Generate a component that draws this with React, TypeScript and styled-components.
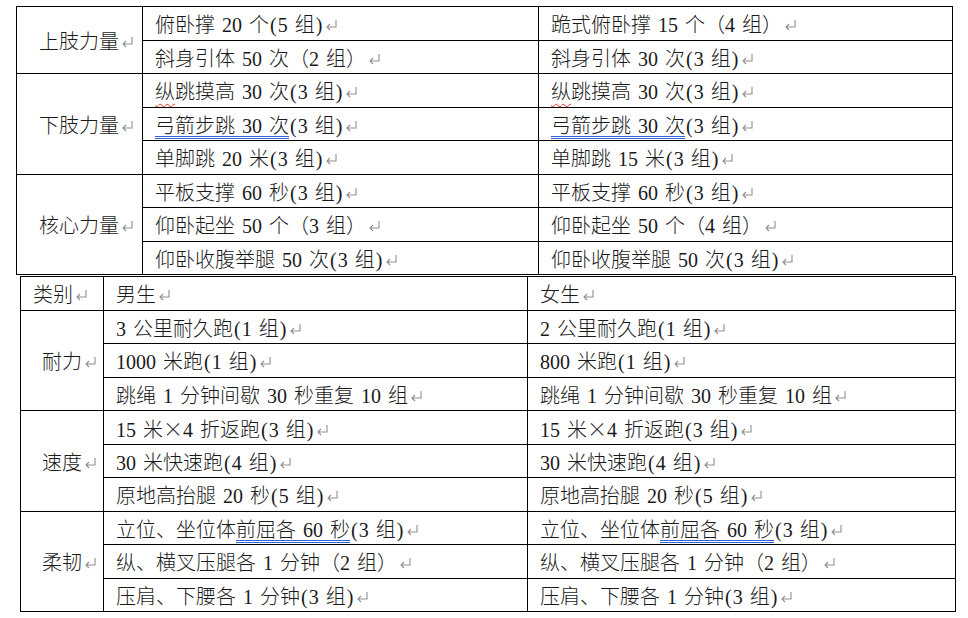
import React from "react";
import styled, { createGlobalStyle } from "styled-components";

const Global = createGlobalStyle`
  html, body { margin: 0; padding: 0; background: #ffffff; }
  body { font-family: "Liberation Serif", "Noto Sans CJK SC", serif; color: #1a1a1a; }
`;

const Page = styled.div`
  display: flex;
  flex-direction: column;
  align-items: flex-start;
  padding: 6px 0 0 16px;
  width: 968px;
  height: 618px;
  box-sizing: border-box;
  overflow: hidden;
`;

const Table = styled.table<{ $offset?: number; $gap?: number }>`
  border-collapse: collapse;
  table-layout: fixed;
  margin-left: ${(p) => p.$offset ?? 0}px;
  margin-top: ${(p) => p.$gap ?? 0}px;
  font-size: 20px;
  font-weight: 300;
  word-spacing: 2px;
`;

const Row = styled.tr`
  height: 33.5px;
`;

const Cell = styled.td`
  border: 1px solid #000;
  padding: 4px 0 0 12px;
  vertical-align: middle;
  white-space: nowrap;
  line-height: 24px;
  box-sizing: border-box;
`;

const CatCell = styled(Cell)<{ $pad: number }>`
  text-align: center;
  padding-left: ${(p) => p.$pad}px;
  padding-right: 0;
`;

const HeadCell = styled(Cell)``;

const MarkSvg = styled.svg`
  display: inline-block;
  width: 13px;
  height: 12px;
  margin-left: 2px;
  vertical-align: 1px;
`;

const Wavy = styled.span`
  text-decoration: underline wavy #e0302a;
  text-decoration-thickness: 1px;
  text-underline-offset: 4px;
`;

const Double = styled.span`
  text-decoration: underline double #2f62d6;
  text-decoration-thickness: 1px;
  text-underline-offset: 3px;
`;

const Wide = styled.span`
  font-family: "Noto Sans CJK SC", sans-serif;
`;

const Paren = styled.span`
  margin: 0 1px;
`;

const R = () => (
  <MarkSvg viewBox="0 0 13 12" aria-hidden="true">
    <path
      d="M11 1 V8 H2 M5 5 L2 8 L5 11"
      fill="none"
      stroke="#8f8f8f"
      strokeWidth="1.1"
    />
  </MarkSvg>
);

type Content = React.ReactNode;

interface Group {
  cat: string;
  rows: [Content, Content][];
}

// render helper: widen ASCII parentheses like SimSun half-width glyphs
const t = (s: string): Content =>
  s.split(/([()])/).map((part, i) =>
    part === "(" || part === ")" ? <Paren key={i}>{part}</Paren> : part
  );

const table1: Group[] = [
  {
    cat: "上肢力量",
    rows: [
      [t("俯卧撑 20 个(5 组)"), "跪式俯卧撑 15 个（4 组）"],
      ["斜身引体 50 次（2 组）", t("斜身引体 30 次(3 组)")],
    ],
  },
  {
    cat: "下肢力量",
    rows: [
      [
        <><Wavy>纵</Wavy>{t("跳摸高 30 次(3 组)")}</>,
        <><Wavy>纵</Wavy>{t("跳摸高 30 次(3 组)")}</>,
      ],
      [
        <><Double>弓箭步跳 30 次</Double>{t("(3 组)")}</>,
        <><Double>弓箭步跳 30 次</Double>{t("(3 组)")}</>,
      ],
      [t("单脚跳 20 米(3 组)"), t("单脚跳 15 米(3 组)")],
    ],
  },
  {
    cat: "核心力量",
    rows: [
      [t("平板支撑 60 秒(3 组)"), t("平板支撑 60 秒(3 组)")],
      ["仰卧起坐 50 个（3 组）", "仰卧起坐 50 个（4 组）"],
      [t("仰卧收腹举腿 50 次(3 组)"), t("仰卧收腹举腿 50 次(3 组)")],
    ],
  },
];

const table2: Group[] = [
  {
    cat: "耐力",
    rows: [
      [t("3 公里耐久跑(1 组)"), t("2 公里耐久跑(1 组)")],
      [t("1000 米跑(1 组)"), t("800 米跑(1 组)")],
      ["跳绳 1 分钟间歇 30 秒重复 10 组", "跳绳 1 分钟间歇 30 秒重复 10 组"],
    ],
  },
  {
    cat: "速度",
    rows: [
      [
        <>15 米<Wide>×</Wide>{t("4 折返跑(3 组)")}</>,
        <>15 米<Wide>×</Wide>{t("4 折返跑(3 组)")}</>,
      ],
      [t("30 米快速跑(4 组)"), t("30 米快速跑(4 组)")],
      [t("原地高抬腿 20 秒(5 组)"), t("原地高抬腿 20 秒(5 组)")],
    ],
  },
  {
    cat: "柔韧",
    rows: [
      [
        <>立位、坐位体<Double>前屈各 60 秒</Double>{t("(3 组)")}</>,
        <>立位、坐位体<Double>前屈各 60 秒</Double>{t("(3 组)")}</>,
      ],
      ["纵、横叉压腿各 1 分钟（2 组）", "纵、横叉压腿各 1 分钟（2 组）"],
      [t("压肩、下腰各 1 分钟(3 组)"), t("压肩、下腰各 1 分钟(3 组)")],
    ],
  },
];

const GroupRows = ({ g, pad }: { g: Group; pad: number }) => (
  <>
    {g.rows.map((r, i) => (
      <Row key={i}>
        {i === 0 && (
          <CatCell rowSpan={g.rows.length} $pad={pad}>
            {g.cat}
            <R />
          </CatCell>
        )}
        <Cell>
          {r[0]}
          <R />
        </Cell>
        <Cell>
          {r[1]}
          <R />
        </Cell>
      </Row>
    ))}
  </>
);

export default function App() {
  return (
    <Page>
      <Global />
      <Table style={{ width: 936 }}>
        <colgroup>
          <col style={{ width: 126 }} />
          <col style={{ width: 396 }} />
          <col style={{ width: 414 }} />
        </colgroup>
        <tbody>
          {table1.map((g) => (
            <GroupRows key={g.cat} g={g} pad={14} />
          ))}
        </tbody>
      </Table>
      <Table $offset={4} $gap={1} style={{ width: 935 }}>
        <colgroup>
          <col style={{ width: 83 }} />
          <col style={{ width: 424 }} />
          <col style={{ width: 428 }} />
        </colgroup>
        <tbody>
          <Row>
            <HeadCell>
              类别
              <R />
            </HeadCell>
            <Cell>
              男生
              <R />
            </Cell>
            <Cell>
              女生
              <R />
            </Cell>
          </Row>
          {table2.map((g) => (
            <GroupRows key={g.cat} g={g} pad={15} />
          ))}
        </tbody>
      </Table>
    </Page>
  );
}
